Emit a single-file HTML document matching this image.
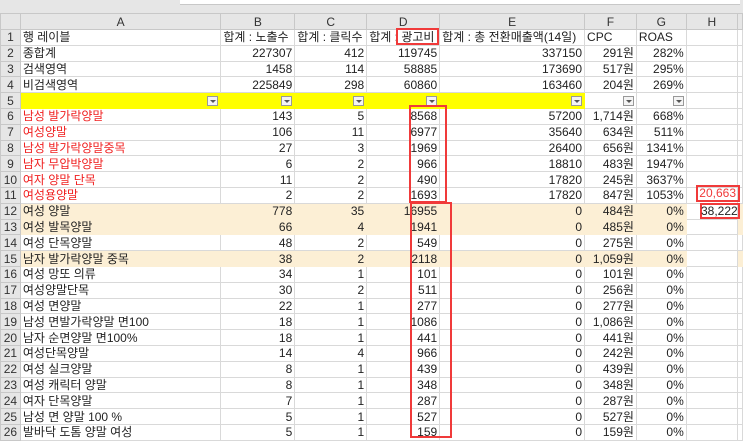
<!DOCTYPE html>
<html><head><meta charset="utf-8"><style>
*{margin:0;padding:0;box-sizing:border-box}
body{width:743px;height:440px;overflow:hidden;background:#e6e6e6;font-family:"Liberation Sans","Noto Sans CJK KR","NanumGothic",sans-serif;font-size:12px;color:#222;position:relative}
.topbox{position:absolute;left:180px;top:0;width:560px;height:5px;background:#fff;border-bottom:1px solid #c8c8c8}
table{position:absolute;left:0;top:13px;border-collapse:collapse;table-layout:fixed;background:#fff}
td{border:1px solid #d9d9d9;height:15.8px;padding:0 2px;white-space:nowrap;overflow:hidden;line-height:14px;text-align:right}
tr.h td{background:#e6e6e6;color:#333;text-align:center;height:16px;border-color:#c8c8c8;font-size:12px}
td.rh{background:#e6e6e6;color:#333;text-align:center;border-color:#c8c8c8;padding:0;font-size:12px}
td.l{text-align:left}
.r td.a{color:#f02020}
tr.p td:not(.rh){background:#fcefd5;border-color:#fcefd5}
tr.y td.yy{background:#ffff00;border-color:#ffff00}
.dd{display:inline-block;width:11px;height:10px;border:1px solid #999;background:#f4f4f4;vertical-align:middle;position:relative}
.dd:after{content:"";position:absolute;left:2px;top:3px;border:3px solid transparent;border-top:3px solid #555}
.box{position:absolute;border:2px solid #f03a3a}
.hv{position:absolute;font-size:12px;text-align:right}
</style></head><body>
<div class="topbox"></div>
<table>
<colgroup><col style="width:20px"><col style="width:202px"><col style="width:74px"><col style="width:72px"><col style="width:73px"><col style="width:145px"><col style="width:52px"><col style="width:50px"><col style="width:52px"><col style="width:3px"></colgroup>
<tr class="h"><td></td><td>A</td><td>B</td><td>C</td><td>D</td><td>E</td><td>F</td><td>G</td><td>H</td><td></td></tr>
<tr><td class="rh">1</td><td class="l">행 레이블</td><td class="l">합계 : 노출수</td><td class="l">합계 : 클릭수</td><td class="l">합계 : 광고비</td><td class="l">합계 : 총 전환매출액(14일)</td><td class="l">CPC</td><td class="l">ROAS</td><td></td><td></td></tr>
<tr><td class="rh">2</td><td class="l">종합계</td><td>227307</td><td>412</td><td>119745</td><td>337150</td><td>291원</td><td>282%</td><td></td><td></td></tr>
<tr><td class="rh">3</td><td class="l">검색영역</td><td>1458</td><td>114</td><td>58885</td><td>173690</td><td>517원</td><td>295%</td><td></td><td></td></tr>
<tr><td class="rh">4</td><td class="l">비검색영역</td><td>225849</td><td>298</td><td>60860</td><td>163460</td><td>204원</td><td>269%</td><td></td><td></td></tr>
<tr class="y"><td class="rh">5</td><td class="yy"><span class="dd"></span></td><td class="yy"><span class="dd"></span></td><td class="yy"><span class="dd"></span></td><td class="yy"><span class="dd"></span></td><td class="yy"><span class="dd"></span></td><td><span class="dd"></span></td><td><span class="dd"></span></td><td></td><td></td></tr>
<tr class="r"><td class="rh">6</td><td class="l a">남성 발가락양말</td><td>143</td><td>5</td><td>8568</td><td>57200</td><td>1,714원</td><td>668%</td><td></td><td></td></tr>
<tr class="r"><td class="rh">7</td><td class="l a">여성양말</td><td>106</td><td>11</td><td>6977</td><td>35640</td><td>634원</td><td>511%</td><td></td><td></td></tr>
<tr class="r"><td class="rh">8</td><td class="l a">남성 발가락양말중목</td><td>27</td><td>3</td><td>1969</td><td>26400</td><td>656원</td><td>1341%</td><td></td><td></td></tr>
<tr class="r"><td class="rh">9</td><td class="l a">남자 무압박양말</td><td>6</td><td>2</td><td>966</td><td>18810</td><td>483원</td><td>1947%</td><td></td><td></td></tr>
<tr class="r"><td class="rh">10</td><td class="l a">여자 양말 단목</td><td>11</td><td>2</td><td>490</td><td>17820</td><td>245원</td><td>3637%</td><td></td><td></td></tr>
<tr class="r"><td class="rh">11</td><td class="l a">여성용양말</td><td>2</td><td>2</td><td>1693</td><td>17820</td><td>847원</td><td>1053%</td><td></td><td></td></tr>
<tr class="p"><td class="rh">12</td><td class="l">여성 양말</td><td>778</td><td>35</td><td>16955</td><td>0</td><td>484원</td><td>0%</td><td style="background:#fff;border-color:#d9d9d9"></td><td></td></tr>
<tr class="p"><td class="rh">13</td><td class="l">여성 발목양말</td><td>66</td><td>4</td><td>1941</td><td>0</td><td>485원</td><td>0%</td><td style="background:#fff;border-color:#d9d9d9"></td><td></td></tr>
<tr><td class="rh">14</td><td class="l">여성 단목양말</td><td>48</td><td>2</td><td>549</td><td>0</td><td>275원</td><td>0%</td><td></td><td></td></tr>
<tr class="p"><td class="rh">15</td><td class="l">남자 발가락양말 중목</td><td>38</td><td>2</td><td>2118</td><td>0</td><td>1,059원</td><td>0%</td><td style="background:#fff;border-color:#d9d9d9"></td><td></td></tr>
<tr><td class="rh">16</td><td class="l">여성 망또 의류</td><td>34</td><td>1</td><td>101</td><td>0</td><td>101원</td><td>0%</td><td></td><td></td></tr>
<tr><td class="rh">17</td><td class="l">여성양말단목</td><td>30</td><td>2</td><td>511</td><td>0</td><td>256원</td><td>0%</td><td></td><td></td></tr>
<tr><td class="rh">18</td><td class="l">여성 면양말</td><td>22</td><td>1</td><td>277</td><td>0</td><td>277원</td><td>0%</td><td></td><td></td></tr>
<tr><td class="rh">19</td><td class="l">남성 면발가락양말 면100</td><td>18</td><td>1</td><td>1086</td><td>0</td><td>1,086원</td><td>0%</td><td></td><td></td></tr>
<tr><td class="rh">20</td><td class="l">남자 순면양말 면100%</td><td>18</td><td>1</td><td>441</td><td>0</td><td>441원</td><td>0%</td><td></td><td></td></tr>
<tr><td class="rh">21</td><td class="l">여성단목양말</td><td>14</td><td>4</td><td>966</td><td>0</td><td>242원</td><td>0%</td><td></td><td></td></tr>
<tr><td class="rh">22</td><td class="l">여성 실크양말</td><td>8</td><td>1</td><td>439</td><td>0</td><td>439원</td><td>0%</td><td></td><td></td></tr>
<tr><td class="rh">23</td><td class="l">여성 캐릭터 양말</td><td>8</td><td>1</td><td>348</td><td>0</td><td>348원</td><td>0%</td><td></td><td></td></tr>
<tr><td class="rh">24</td><td class="l">여자 단목양말</td><td>7</td><td>1</td><td>287</td><td>0</td><td>287원</td><td>0%</td><td></td><td></td></tr>
<tr><td class="rh">25</td><td class="l">남성 면 양말 100 %</td><td>5</td><td>1</td><td>527</td><td>0</td><td>527원</td><td>0%</td><td></td><td></td></tr>
<tr><td class="rh">26</td><td class="l">발바닥 도톰 양말 여성</td><td>5</td><td>1</td><td>159</td><td>0</td><td>159원</td><td>0%</td><td></td><td></td></tr>
</table>
<div class="box" style="left:396px;top:28px;width:43px;height:17px"></div>
<div class="box" style="left:409px;top:105px;width:38px;height:98px"></div>
<div class="box" style="left:410px;top:202px;width:42px;height:236px"></div>
<div class="box" style="left:696px;top:185px;width:44px;height:17px"></div>
<div class="box" style="left:700px;top:203px;width:40px;height:16px"></div>
<div class="hv" style="left:698px;top:186px;width:38px;color:#f03a3a">20,663</div>
<div class="hv" style="left:701px;top:204px;width:36px;color:#222">38,222</div>
</body></html>
